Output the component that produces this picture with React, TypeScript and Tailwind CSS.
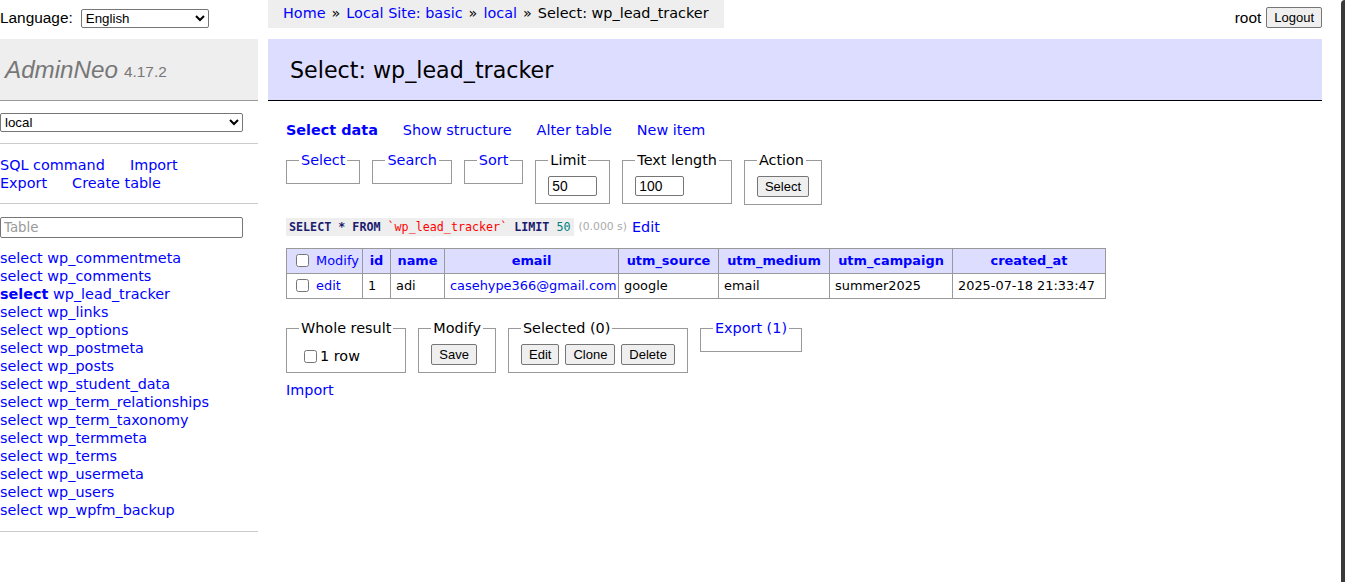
import React from 'react';

const tables = [
  'wp_commentmeta',
  'wp_comments',
  'wp_lead_tracker',
  'wp_links',
  'wp_options',
  'wp_postmeta',
  'wp_posts',
  'wp_student_data',
  'wp_term_relationships',
  'wp_term_taxonomy',
  'wp_termmeta',
  'wp_terms',
  'wp_usermeta',
  'wp_users',
  'wp_wpfm_backup',
];

const columns = [
  { name: 'id', w: 'w-[28px]' },
  { name: 'name', w: 'w-[54px]' },
  { name: 'email', w: 'w-[174px]' },
  { name: 'utm_source', w: 'w-[100px]' },
  { name: 'utm_medium', w: 'w-[111px]' },
  { name: 'utm_campaign', w: 'w-[123px]' },
  { name: 'created_at', w: 'w-[153px]' },
];

const btn =
  'bg-[#efefef] border border-[#767676] rounded-[2px] px-[7px] h-[21px] text-[13px] leading-none text-black';
const ctl = "font-['Liberation_Sans',Arial,sans-serif]";
const cell = 'border border-[#999] px-[5px] py-[3px]';

function Fieldset({ legend, link, children }: { legend: string; link?: boolean; children?: React.ReactNode }) {
  return (
    <fieldset className="border border-[#999] px-[12px] pt-[7px] pb-[7px] min-w-0">
      <legend className={`px-[2px] ${link ? 'text-[#00f]' : ''}`}>{legend}</legend>
      {children}
    </fieldset>
  );
}

export default function App() {
  return (
    <div className="relative min-h-[582px] flex bg-white text-black font-['DejaVu_Sans',Verdana,sans-serif] text-[14.4px] leading-[18px]">
      {/* sidebar */}
      <div className="w-[258px] shrink-0">
        <div className="h-[39px] flex items-start pt-[8px] gap-[8px]">
          <span className={`${ctl} text-[15.4px] leading-[19px]`}>Language:</span>
          <select className={`${ctl} text-[13.33px] w-[128px] h-[19px] mt-[1px] border border-[#767676] rounded-[2px] bg-white`}>
            <option>English</option>
          </select>
        </div>
        <div className="h-[62px] bg-[#eee] border-b border-[#999] flex items-center pl-[5px] gap-[6px] font-['Liberation_Sans',Arial,sans-serif] text-[#777]">
          <span className="italic text-[24.2px]">AdminNeo</span>
          <span className="text-[15.4px] mt-[4px]">4.17.2</span>
        </div>
        <div className="pt-[12px]">
          <select className={`${ctl} text-[13.33px] w-[243px] h-[19px] border border-[#767676] rounded-[2px] bg-white`}>
            <option>local</option>
          </select>
        </div>
        <div className="mt-[11px] border-t border-[#ccc] pt-[12px] pb-[11px]">
          <div className="flex gap-[25px]">
            <a className="text-[#00f]">SQL command</a>
            <a className="text-[#00f]">Import</a>
          </div>
          <div className="flex gap-[25px]">
            <a className="text-[#00f]">Export</a>
            <a className="text-[#00f]">Create table</a>
          </div>
        </div>
        <div className="border-t border-[#ccc] pt-[13px]">
          <input
            placeholder="Table"
            className="w-[243px] h-[21px] border border-[#767676] rounded-[2px] px-[3px] text-[13.33px] placeholder:text-[#999]"
          />
          <ul className="mt-[11px]">
            {tables.map((t) => (
              <li key={t}>
                <a className={`text-[#00f] ${t === 'wp_lead_tracker' ? 'font-bold' : ''}`}>select</a>{' '}
                <a className="text-[#00f]">{t}</a>
              </li>
            ))}
          </ul>
          <div className="mt-[12px] border-t border-[#ccc]" />
        </div>
      </div>

      {/* content */}
      <div className="flex-1 ml-[10px] mr-[23px]">
        <div className="flex justify-between items-start">
          <div className="bg-[#eee] h-[28px] px-[15px] flex items-center pb-[2px]">
            <a className="text-[#00f]">Home</a>
            <span className="mx-[6px]">»</span>
            <a className="text-[#00f]">Local Site: basic</a>
            <span className="mx-[6px]">»</span>
            <a className="text-[#00f]">local</a>
            <span className="mx-[6px]">»</span>
            <span>Select: wp_lead_tracker</span>
          </div>
          <div className="flex items-center gap-[5px] pt-[7px]">
            <span className={`${ctl} text-[15.4px]`}>root</span>
            <button className={`${btn} ${ctl} h-[21px] text-[13.4px]`}>Logout</button>
          </div>
        </div>

        <h2 className="mt-[11px] h-[62px] bg-[#ddf] border-b border-black flex items-center pl-[22px] text-[22.2px] font-normal">
          Select: wp_lead_tracker
        </h2>

        <div className="pl-[18px]">
          <div className="mt-[20px] flex gap-[25px]">
            <a className="text-[#00f] font-bold">Select data</a>
            <a className="text-[#00f]">Show structure</a>
            <a className="text-[#00f]">Alter table</a>
            <a className="text-[#00f]">New item</a>
          </div>

          <div className="mt-[12px] flex items-start gap-[12px]">
            <Fieldset legend="Select" link />
            <Fieldset legend="Search" link />
            <Fieldset legend="Sort" link />
            <Fieldset legend="Limit">
              <input defaultValue="50" className={`${ctl} w-[49px] h-[20px] border border-[#767676] rounded-[2px] px-[3px] text-[13.8px]`} />
            </Fieldset>
            <Fieldset legend="Text length">
              <input defaultValue="100" className={`${ctl} w-[49px] h-[20px] border border-[#767676] rounded-[2px] px-[3px] text-[13.8px]`} />
            </Fieldset>
            <Fieldset legend="Action">
              <button className={`${btn} ${ctl}`}>Select</button>
            </Fieldset>
          </div>

          <div className="mt-[13px] flex items-center gap-[5px]">
            <code className="bg-[#eee] h-[18px] px-[3px] flex items-center font-['DejaVu_Sans_Mono',monospace] text-[11.7px] whitespace-pre">
              <b className="text-[#1a1a6e]">SELECT</b>
              <b className="text-[#1a1a6e]"> * </b>
              <b className="text-[#1a1a6e]">FROM </b>
              <span className="text-[#f00]">`wp_lead_tracker`</span>
              <b className="text-[#1a1a6e]"> LIMIT </b>
              <span className="text-[#008080]">50</span>
            </code>
            <span className="text-[#aaa] text-[10.8px]">(0.000 s)</span>
            <a className="text-[#00f]">Edit</a>
          </div>

          <table className="mt-[12px] table-fixed w-[819px] border-collapse border border-[#999] text-[12.9px] leading-[18px]">
            <thead>
              <tr className="bg-[#ddf]">
                <th className={`${cell} w-[76px] text-left font-normal whitespace-nowrap`}>
                  <input type="checkbox" className="ml-[4px] mr-[3px] align-[-2px]" />{' '}
                  <a className="text-[#00f]">Modify</a>
                </th>
                {columns.map((c) => (
                  <th key={c.name} className={`${cell} ${c.w} font-bold text-center whitespace-nowrap`}>
                    <a className="text-[#00f]">{c.name}</a>
                  </th>
                ))}
              </tr>
            </thead>
            <tbody>
              <tr>
                <td className={`${cell} whitespace-nowrap`}>
                  <input type="checkbox" className="ml-[4px] mr-[3px] align-[-2px]" />{' '}
                  <a className="text-[#00f]">edit</a>
                </td>
                <td className={cell}>1</td>
                <td className={cell}>adi</td>
                <td className={`${cell} whitespace-nowrap`}>
                  <a className="text-[#00f]">casehype366@gmail.com</a>
                </td>
                <td className={cell}>google</td>
                <td className={cell}>email</td>
                <td className={cell}>summer2025</td>
                <td className={`${cell} whitespace-nowrap`}>2025-07-18 21:33:47</td>
              </tr>
            </tbody>
          </table>

          <div className="mt-[20px] flex items-start gap-[12px]">
            <Fieldset legend="Whole result">
              <label className="flex items-center gap-[3px] pl-[5px] pt-[3px]">
                <input type="checkbox" className="m-0" />
                <span>1 row</span>
              </label>
            </Fieldset>
            <Fieldset legend="Modify">
              <button className={`${btn} ${ctl}`}>Save</button>
            </Fieldset>
            <Fieldset legend="Selected (0)">
              <div className="flex gap-[6px]">
                <button className={`${btn} ${ctl}`}>Edit</button>
                <button className={`${btn} ${ctl}`}>Clone</button>
                <button className={`${btn} ${ctl}`}>Delete</button>
              </div>
            </Fieldset>
            <Fieldset legend="Export (1)" link />
          </div>

          <div className="mt-[8px]">
            <a className="text-[#00f]">Import</a>
          </div>
        </div>
      </div>

      <div className="absolute right-0 top-0 bottom-0 w-[4px] bg-[#3a3a3a] rounded-tl-[6px]" />
    </div>
  );
}
